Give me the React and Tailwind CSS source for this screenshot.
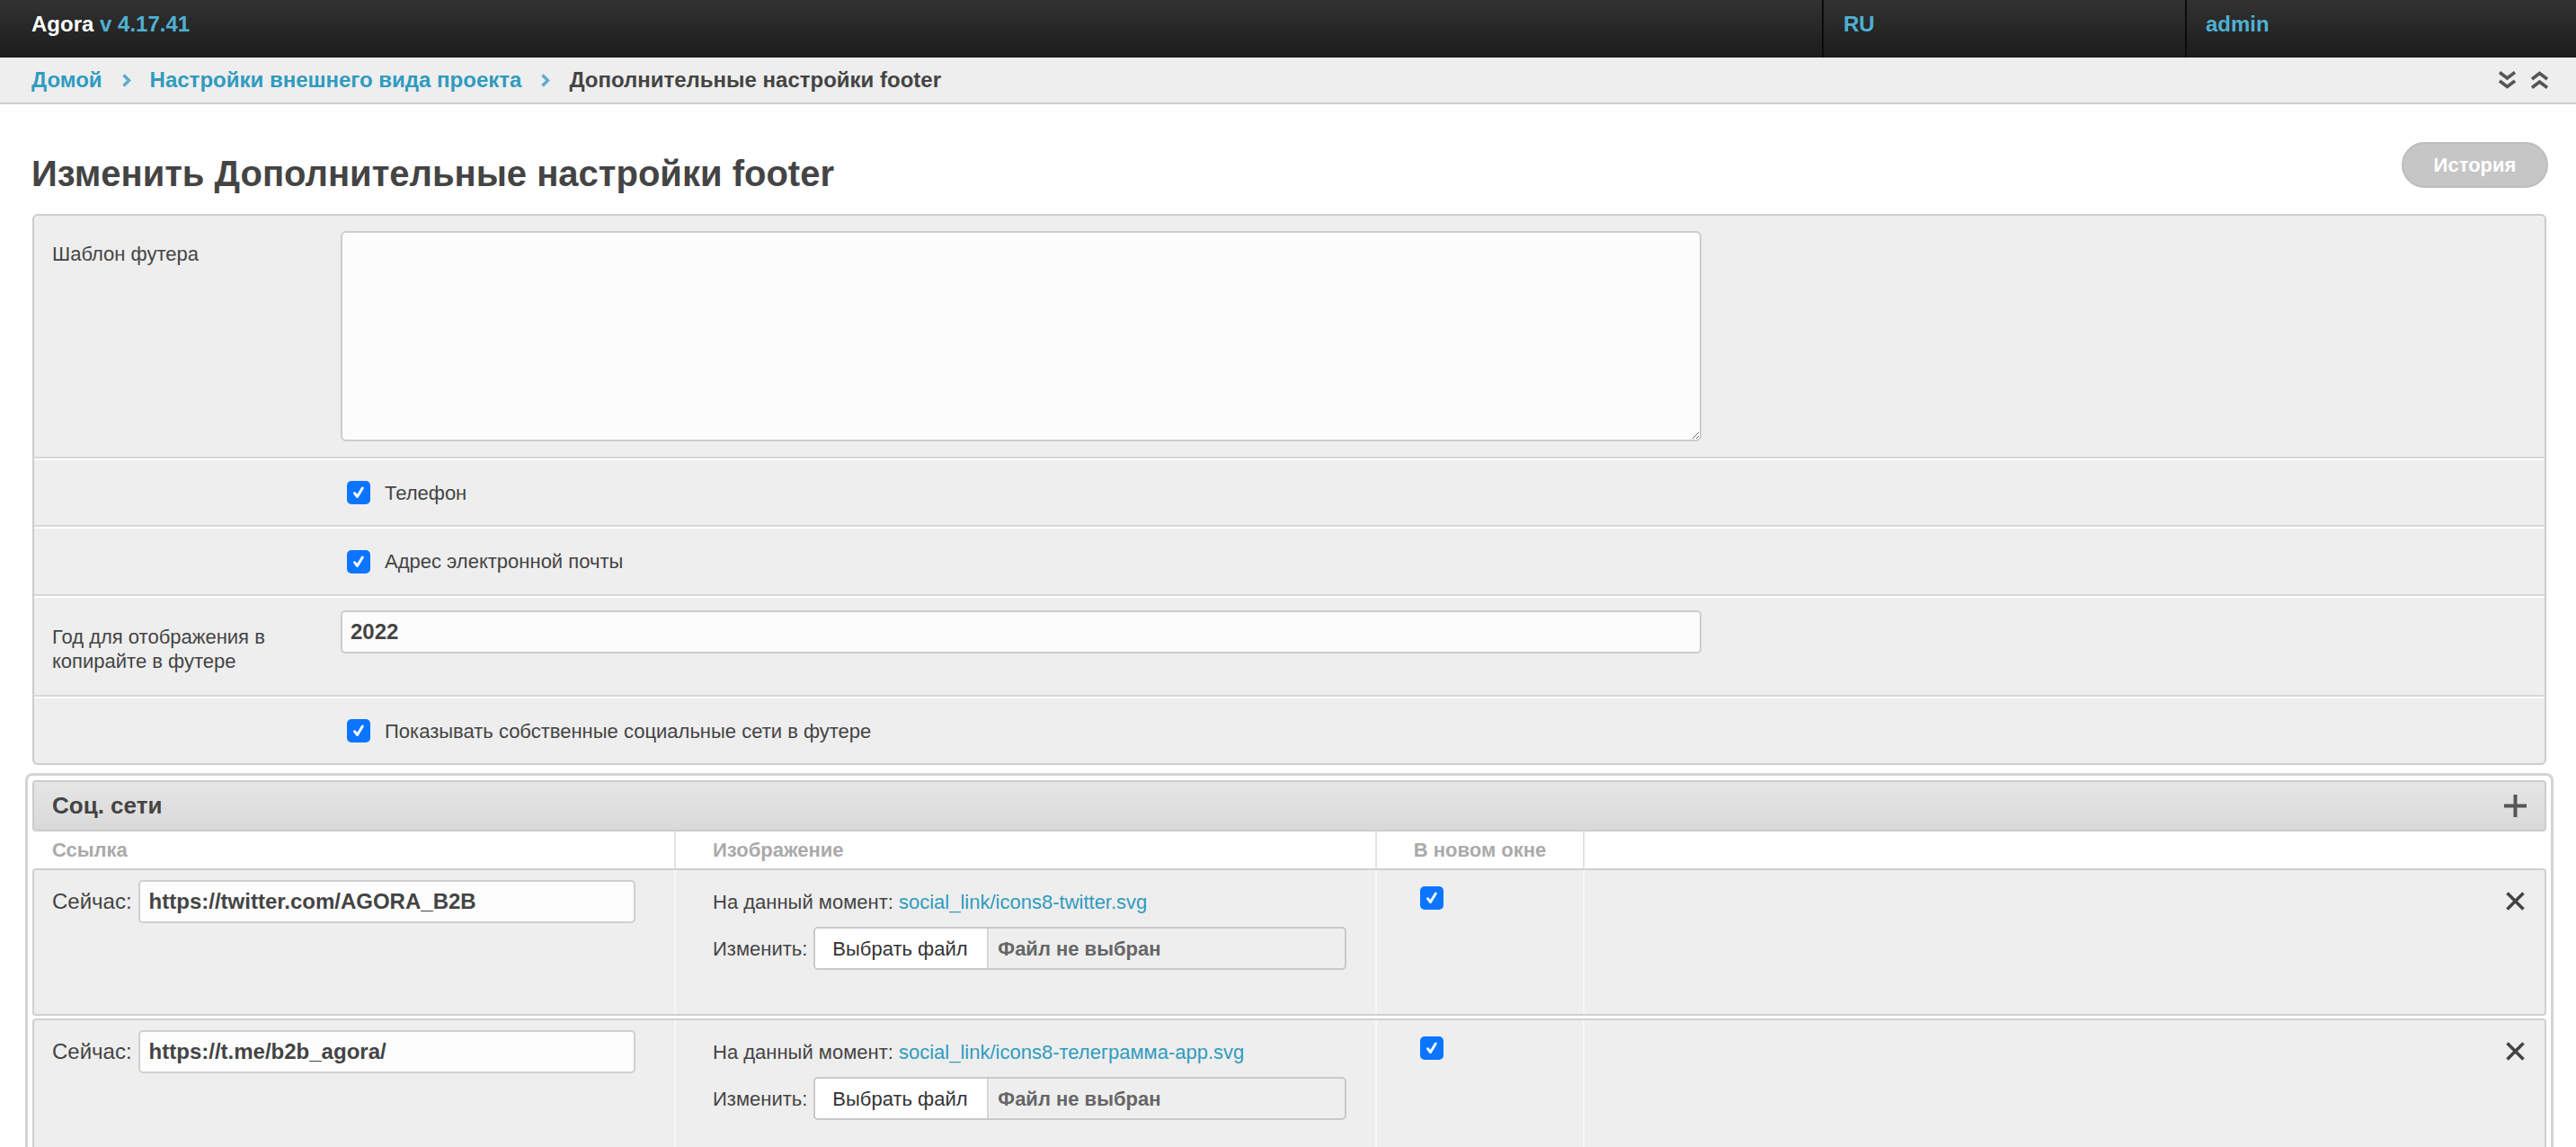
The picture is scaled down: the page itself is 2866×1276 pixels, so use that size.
import React from 'react';

function Check() {
  return (
    <span className="inline-flex w-[26px] h-[26px] shrink-0 items-center justify-center rounded-[5px] bg-[#0b75ff]">
      <svg viewBox="0 0 16 16" className="w-[18px] h-[18px]">
        <path d="M4 8.6 L6.7 12 L11.8 3.6" fill="none" stroke="white" strokeWidth="2.6" strokeLinecap="round" strokeLinejoin="round" />
      </svg>
    </span>
  );
}

function Crumb() {
  return (
    <svg viewBox="0 0 11 15" className="w-[11px] h-[15px] mx-[21px]">
      <path d="M2.5 1.5 L8.5 7.5 L2.5 13.5" fill="none" stroke="#5eabd0" strokeWidth="3.4" />
    </svg>
  );
}

function FileField() {
  return (
    <div className="flex h-[48px] w-[593px] rounded-[5px] border-2 border-[#c9c9c9] overflow-hidden">
      <div className="flex items-center bg-white pl-[19px] w-[193px] border-r-2 border-[#d6d6d6] text-[#333]">Выбрать файл</div>
      <div className="flex items-center pl-[10px] font-bold text-[#666]">Файл не выбран</div>
    </div>
  );
}

function Row({ url, file }) {
  return (
    <div className="flex h-[164px] rounded-[4px] border-2 border-[#d0d0d0] bg-[#eeeeee]">
      <div className="w-[712px] pl-[20px] pt-[11px]">
        <div className="flex items-center gap-[7px]">
          <span className="text-[24px]">Сейчас:</span>
          <input
            readOnly
            defaultValue={url}
            className="h-[48px] w-[553px] rounded-[5px] border-2 border-[#cfcfcf] bg-[#fdfdfd] pl-[10px] text-[24px] font-bold text-[#444] outline-none"
          />
        </div>
      </div>
      <div className="w-[780px] border-l-2 border-[#f7f7f7] pl-[41px] pt-[22px]">
        <div className="leading-[28px]">
          На данный момент: <span className="text-[#309bbf]">{file}</span>
        </div>
        <div className="mt-[13px] flex items-center gap-[7px]">
          <span>Изменить:</span>
          <FileField />
        </div>
      </div>
      <div className="w-[231px] border-l-2 border-[#f7f7f7] pl-[48px] pt-[16px]">
        <Check />
      </div>
      <div className="flex-1 border-l-2 border-[#f7f7f7] flex justify-end pr-[21px] pt-[24px]">
        <svg viewBox="0 0 23 21" className="w-[23px] h-[21px]">
          <path d="M2.5 1.5 L20.5 19.5 M20.5 1.5 L2.5 19.5" stroke="#444" strokeWidth="3.6" fill="none" />
        </svg>
      </div>
    </div>
  );
}

export default function App() {
  return (
    <div className="min-h-screen bg-white font-['Liberation_Sans',Arial,sans-serif] text-[22px] text-[#444]">
      <header className="flex h-[64px] bg-gradient-to-b from-[#323232] to-[#1c1c1c] text-[24px] font-bold leading-[28px]">
        <div className="flex-1 pl-[35px] pt-[13px] text-white">
          Agora <span className="text-[#4fb0d2]">v 4.17.41</span>
        </div>
        <div className="w-[404px] border-l-2 border-[#0c0c0c] pl-[22px] pt-[13px] text-[#4fb0d2]">RU</div>
        <div className="w-[435px] border-l-2 border-[#0c0c0c] pl-[21px] pt-[13px] text-[#4fb0d2]">admin</div>
      </header>

      <nav className="flex h-[52px] items-center border-b-2 border-[#cccccc] bg-[#eeeeee] pl-[35px] pr-[30px] text-[24px] font-bold">
        <a className="text-[#309bbf]">Домой</a>
        <Crumb />
        <a className="text-[#309bbf]">Настройки внешнего вида проекта</a>
        <Crumb />
        <span className="text-[#444]">Дополнительные настройки footer</span>
        <div className="ml-auto flex items-center gap-[15px]">
          <svg viewBox="0 0 21 22" className="w-[21px] h-[22px]">
            <path d="M2 2.5 L10.5 9 L19 2.5 M2 12 L10.5 18.5 L19 12" fill="none" stroke="#555" strokeWidth="3.6" />
          </svg>
          <svg viewBox="0 0 21 22" className="w-[21px] h-[22px]">
            <path d="M2 10 L10.5 3.5 L19 10 M2 19.5 L10.5 13 L19 19.5" fill="none" stroke="#555" strokeWidth="3.6" />
          </svg>
        </div>
      </nav>

      <main className="pl-[28px] pr-[25px]">
        <div className="flex items-start justify-between">
          <h1 className="ml-[7px] mt-[53px] text-[40px] font-bold leading-[48px] text-[#444]">
            Изменить Дополнительные настройки footer
          </h1>
          <button className="mr-[6px] mt-[42px] h-[51px] w-[163px] rounded-full border-2 border-[#bdbdbd] bg-[#c6c6c6] font-bold text-white">
            История
          </button>
        </div>

        <section className="mx-[8px] mt-[21px] rounded-[6px] border-2 border-[#cccccc] bg-[#eeeeee]">
          <div className="flex h-[270px] border-b-2 border-[#d8d8d8]">
            <div className="w-[341px] pl-[20px] pt-[29px] leading-[27px]">Шаблон футера</div>
            <div className="pt-[17px]">
              <textarea className="h-[234px] w-[1514px] rounded-[6px] border-2 border-[#cccccc] bg-[#fcfcfc] outline-none" />
            </div>
          </div>
          <div className="flex h-[76px] items-center border-y-2 border-b-[#d8d8d8] border-t-white pl-[348px]">
            <Check />
            <span className="ml-[16px]">Телефон</span>
          </div>
          <div className="flex h-[77px] items-center border-y-2 border-b-[#d8d8d8] border-t-white pl-[348px]">
            <Check />
            <span className="ml-[16px]">Адрес электронной почты</span>
          </div>
          <div className="flex h-[112px] border-y-2 border-b-[#d8d8d8] border-t-white">
            <div className="w-[341px] pl-[20px] pr-[40px] pt-[30px] leading-[27px]">
              Год для отображения в копирайте в футере
            </div>
            <div className="pt-[14px]">
              <input
                readOnly
                defaultValue="2022"
                className="h-[48px] w-[1514px] rounded-[5px] border-2 border-[#cccccc] bg-[#fcfcfc] pl-[9px] text-[24px] font-bold text-[#444] outline-none"
              />
            </div>
          </div>
          <div className="flex h-[74px] items-center border-t-2 border-white pl-[348px]">
            <Check />
            <span className="ml-[16px]">Показывать собственные социальные сети в футере</span>
          </div>
        </section>

        <section className="mt-[9px] rounded-[8px] border-[3px] border-b-0 border-[#d4d4d4] bg-white px-[5px] pt-[5px]">
          <div className="flex h-[57px] items-center rounded-[4px] border-2 border-[#cccccc] bg-gradient-to-b from-[#e6e6e6] to-[#d9d9d9] pl-[20px] pr-[20px]">
            <span className="text-[26px] font-bold text-[#444]">Соц. сети</span>
            <svg viewBox="0 0 25 25" className="ml-auto w-[25px] h-[25px]">
              <path d="M12.5 0 V25 M0 12.5 H25" stroke="#555" strokeWidth="4" fill="none" />
            </svg>
          </div>
          <div className="flex h-[41px] items-stretch font-bold text-[#aaaaaa]">
            <div className="flex w-[714px] items-center pl-[22px]">Ссылка</div>
            <div className="flex w-[780px] items-center border-l-2 border-[#e4e4e4] pl-[41px]">Изображение</div>
            <div className="flex w-[231px] items-center justify-center border-l-2 border-[#e4e4e4]">В новом окне</div>
            <div className="flex-1 border-l-2 border-[#e4e4e4]" />
          </div>
          <div className="flex flex-col gap-[3px]">
            <Row url="https://twitter.com/AGORA_B2B" file="social_link/icons8-twitter.svg" />
            <Row url="https://t.me/b2b_agora/" file="social_link/icons8-телеграмма-app.svg" />
          </div>
        </section>
      </main>
    </div>
  );
}
